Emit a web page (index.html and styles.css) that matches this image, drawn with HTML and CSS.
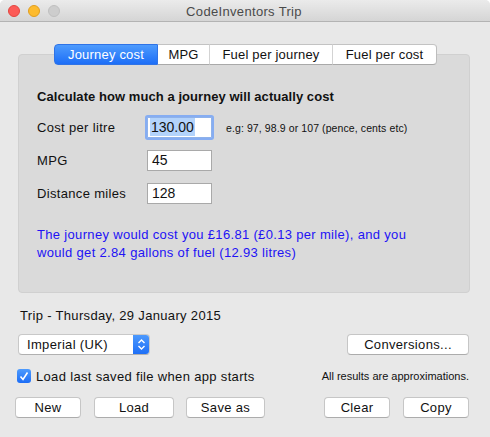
FILE: index.html
```html
<!DOCTYPE html>
<html>
<head>
<meta charset="utf-8">
<link rel="stylesheet" href="styles.css">
</head>
<body>
<div class="window">
  <div class="titlebar">
    <div class="lights">
      <span class="light red"></span>
      <span class="light yellow"></span>
      <span class="light gray"></span>
    </div>
    <div class="title">CodeInventors Trip</div>
  </div>
  <div class="main">
    <div class="tabs">
      <div class="tab selected t1">Journey cost</div>
      <div class="tab t2">MPG</div>
      <div class="tab t3">Fuel per journey</div>
      <div class="tab t4">Fuel per cost</div>
    </div>
    <div class="tabbox">
      <div class="heading">Calculate how much a journey will actually cost</div>
      <div class="rows">
        <div class="row">
          <div class="label">Cost per litre</div>
          <div class="field focused"><span class="sel">130.00</span></div>
          <div class="hint">e.g: 97, 98.9 or 107 (pence, cents etc)</div>
        </div>
        <div class="row">
          <div class="label">MPG</div>
          <div class="field">45</div>
        </div>
        <div class="row">
          <div class="label">Distance miles</div>
          <div class="field">128</div>
        </div>
      </div>
      <div class="result">The journey would cost you £16.81 (£0.13 per mile), and you<br>would get 2.84 gallons of fuel (12.93 litres)</div>
    </div>
    <div class="trip">Trip - Thursday, 29 January 2015</div>
    <div class="line2">
      <div class="popup">
        <span class="popup-text">Imperial (UK)</span>
        <span class="stepper">
          <svg width="9" height="13" viewBox="0 0 9 13"><path d="M1.5 5 L4.5 2 L7.5 5" fill="none" stroke="#fff" stroke-width="1.4"/><path d="M1.5 8 L4.5 11 L7.5 8" fill="none" stroke="#fff" stroke-width="1.4"/></svg>
        </span>
      </div>
      <div class="btn conv">Conversions...</div>
    </div>
    <div class="line3">
      <div class="check">
        <span class="box"><svg width="14" height="14" viewBox="0 0 14 14"><path d="M3.5 7.5 L6 10.5 L10.5 3.5" fill="none" stroke="#fff" stroke-width="1.6"/></svg></span>
        <span class="check-label">Load last saved file when app starts</span>
      </div>
      <div class="approx">All results are approximations.</div>
    </div>
    <div class="buttons">
      <div class="btn b-new">New</div>
      <div class="btn b-load">Load</div>
      <div class="btn b-save">Save as</div>
      <div class="spacer"></div>
      <div class="btn b-clear">Clear</div>
      <div class="btn b-copy">Copy</div>
    </div>
  </div>
</div>
</body>
</html>
```
FILE: styles.css
```css
* { box-sizing: border-box; }
html, body { margin: 0; padding: 0; background: #ffffff; }
body {
  font-family: "Liberation Sans", Arial, sans-serif;
  font-size: 13px;
  letter-spacing: 0.33px;
  color: #111;
}
.window {
  width: 490px;
  height: 437px;
  background: #e8e8e8;
  border-radius: 5px 5px 0 0;
  overflow: hidden;
  display: flex;
  flex-direction: column;
}
.titlebar {
  height: 22px;
  background: linear-gradient(#ebebeb, #d5d5d5);
  border-bottom: 1px solid #b3b3b3;
  display: flex;
  align-items: center;
  position: relative;
}
.lights {
  display: flex;
  gap: 8px;
  padding-left: 8px;
}
.light {
  width: 12px;
  height: 12px;
  border-radius: 50%;
  display: block;
}
.red { background: #fc5b57; border: 1px solid #e2463f; }
.yellow { background: #fdbb2e; border: 1px solid #e09e1f; }
.gray { background: #cdcdcd; border: 1px solid #bfbfbf; }
.title {
  flex: 1;
  text-align: center;
  color: #4a4a4a;
  font-size: 13px;
  margin-left: -62px;
  padding-top: 1px;
}
.main {
  display: flex;
  flex-direction: column;
  padding-top: 22px;
}
.tabs {
  display: flex;
  justify-content: center;
  position: relative;
  z-index: 1;
  margin-bottom: -11px;
  margin-left: 1px;
}
.tab {
  height: 21px;
  line-height: 19px;
  text-align: center;
  background: #fff;
  border-top: 1px solid #c3c3c3;
  border-bottom: 1px solid #a9a9a9;
  border-right: 1px solid #d3d3d3;
  font-size: 13px;
  letter-spacing: 0.2px;
}
.t1 { width: 104px; }
.t2 { width: 52px; }
.t3 { width: 123px; }
.t4 { width: 104px; border-right: 1px solid #bdbdbd; border-radius: 0 4px 4px 0; }
.tab.selected {
  background: linear-gradient(#4d9bfd, #1d6ef7);
  color: #fff;
  border: 1px solid #2f73e6;
  border-radius: 4px 0 0 4px;
}
.tabbox {
  margin: 0 20px 0 18px;
  background: #dadada;
  border: 1px solid #d0d0d0;
  border-radius: 4px;
  padding: 34px 0 30px 18px;
}
.heading {
  font-weight: bold;
  line-height: 16px;
  letter-spacing: 0.06px;
}
.rows {
  display: flex;
  flex-direction: column;
  gap: 12px;
  margin-top: 12px;
}
.row {
  display: flex;
  align-items: center;
  height: 21px;
}
.label {
  width: 110px;
}
.field {
  width: 65px;
  height: 21px;
  background: #fff;
  border: 1px solid #a9a9a9;
  padding-left: 4px;
  line-height: 19px;
  font-size: 14px;
  letter-spacing: 0;
}
.field.focused {
  border: 1px solid #8fb2ea;
  box-shadow: 0 0 0 2px #86adf2;
  border-radius: 1px;
  padding-left: 2px;
}
.sel {
  background: #b3d3fb;
  padding: 1px 1px;
}
.hint {
  font-size: 10.5px;
  letter-spacing: 0.1px;
  margin-left: 14px;
}
.result {
  margin-top: 22px;
  color: #2212f5;
  line-height: 18px;
}
.trip {
  margin: 15px 0 0 20px;
  line-height: 16px;
}
.line2 {
  display: flex;
  justify-content: space-between;
  margin: 10px 21px 0 18px;
}
.popup {
  width: 132px;
  height: 21px;
  background: #fff;
  border: 1px solid #c8c8c8;
  border-bottom-color: #b0b0b0;
  border-radius: 4px;
  display: flex;
  align-items: center;
  overflow: hidden;
}
.popup-text {
  flex: 1;
  padding-left: 8px;
}
.stepper {
  width: 17px;
  height: 21px;
  margin-top: -1px;
  margin-right: -1px;
  background: linear-gradient(#4e9bfd, #1c6df6);
  display: flex;
  align-items: center;
  justify-content: center;
  border-radius: 0 4px 4px 0;
}
.btn {
  height: 21px;
  line-height: 19px;
  text-align: center;
  background: #fff;
  border: 1px solid #c6c6c6;
  border-bottom-color: #acacac;
  border-radius: 4px;
}
.conv { width: 122px; }
.line3 {
  display: flex;
  align-items: center;
  justify-content: space-between;
  margin: 14px 21px 0 17px;
  height: 14px;
}
.check {
  display: flex;
  align-items: center;
}
.box {
  width: 14px;
  height: 14px;
  border-radius: 3px;
  background: linear-gradient(#4e9bfd, #1c6df6);
  display: block;
}
.box svg { display: block; }
.check-label {
  margin-left: 5px;
}
.approx {
  font-size: 11px;
  letter-spacing: 0;
}
.buttons {
  display: flex;
  margin: 14px 21px 0 15px;
  height: 21px;
}
.b-new { width: 66px; }
.b-load { width: 80px; margin-left: 13px; }
.b-save { width: 79px; margin-left: 12px; }
.spacer { flex: 1; }
.b-clear { width: 66px; }
.b-copy { width: 66px; margin-left: 13px; }
```
